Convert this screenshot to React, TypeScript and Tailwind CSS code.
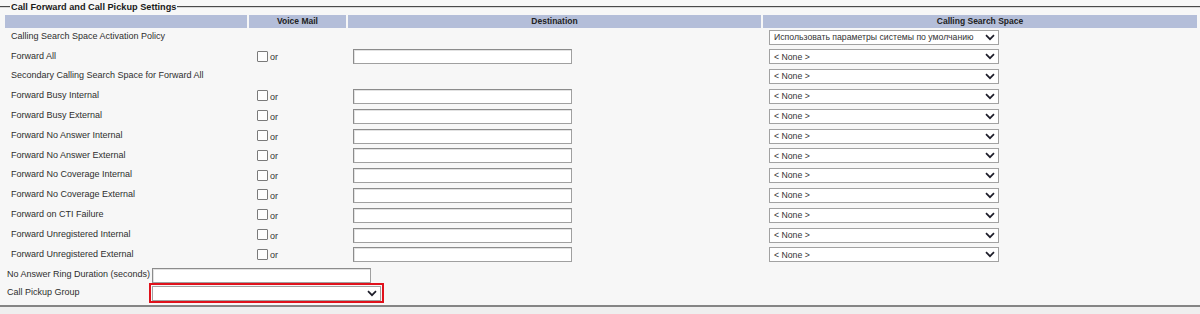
import React from "react";

const Chevron = () => (
  <svg width="10" height="7" viewBox="0 0 10 7" className="shrink-0">
    <path d="M1 1.2 L5 5.2 L9 1.2" fill="none" stroke="#1e1e2a" strokeWidth="1.7" />
  </svg>
);

const Select = ({ text, w = "w-[230px]" }: { text: string; w?: string }) => (
  <div
    className={`${w} h-[15px] bg-white border border-[#a2a2a2] flex items-center justify-between pl-[4px] pr-[3px] text-[#333]`}
  >
    <span className="leading-none whitespace-nowrap text-[8.7px]">{text}</span>
    <Chevron />
  </div>
);

const TextInput = ({ w = "w-[219px]" }: { w?: string }) => (
  <div className={`${w} h-[15px] bg-white border border-[#a0a0a0] border-t-[#8c8c8c] border-l-[#8c8c8c] shadow-[inset_1px_1px_0_#e2e2e2]`} />
);

const Checkbox = () => (
  <div className="flex items-center">
    <div className="w-[11px] h-[11px] bg-[#fdfdfd] border border-[#7a7a7a] rounded-[1px] -mt-[1px]" />
    <span className="ml-[2px] mt-[2px] leading-none text-[#333]">or</span>
  </div>
);

type Row = { label: string; vm: boolean; css: string; h: string };

const rows: Row[] = [
  { label: "Calling Search Space Activation Policy", vm: false, css: "Использовать параметры системы по умолчанию", h: "h-[19px]" },
  { label: "Forward All", vm: true, css: "< None >", h: "h-[19.8px]" },
  { label: "Secondary Calling Search Space for Forward All", vm: false, css: "< None >", h: "h-[19.8px]" },
  { label: "Forward Busy Internal", vm: true, css: "< None >", h: "h-[19.8px]" },
  { label: "Forward Busy External", vm: true, css: "< None >", h: "h-[19.8px]" },
  { label: "Forward No Answer Internal", vm: true, css: "< None >", h: "h-[19.8px]" },
  { label: "Forward No Answer External", vm: true, css: "< None >", h: "h-[19.8px]" },
  { label: "Forward No Coverage Internal", vm: true, css: "< None >", h: "h-[19.8px]" },
  { label: "Forward No Coverage External", vm: true, css: "< None >", h: "h-[19.8px]" },
  { label: "Forward on CTI Failure", vm: true, css: "< None >", h: "h-[19.8px]" },
  { label: "Forward Unregistered Internal", vm: true, css: "< None >", h: "h-[19.8px]" },
  { label: "Forward Unregistered External", vm: true, css: "< None >", h: "h-[19.8px]" },
];

export default function App() {
  return (
    <div className="w-[1200px] h-[314px] overflow-hidden bg-[#f7f7f7] font-['Liberation_Sans',Arial,sans-serif] text-[9px] text-[#2e2e2e] flex flex-col">
      {/* legend */}
      <div className="h-[14px] flex items-center shrink-0">
        <div className="w-[10px] h-[2px] border-t border-[#4a4a4a] border-b border-b-[#d8d8d8]" />
        <span className="px-[1px] mt-[2px] font-bold text-[9.2px] text-[#1a1a1a] leading-none whitespace-nowrap">
          Call Forward and Call Pickup Settings
        </span>
        <div className="flex-1 h-[2px] border-t border-[#4a4a4a] border-b border-b-[#d8d8d8]" />
      </div>

      {/* header */}
      <div className="mt-[1px] h-[13px] flex gap-[2px] pl-[5px] shrink-0 font-bold text-[8.5px] text-[#222]">
        <div className="w-[242px] bg-[#b4bed9]" />
        <div className="w-[97px] bg-[#b4bed9] flex items-center justify-center">Voice Mail</div>
        <div className="w-[413px] bg-[#b4bed9] flex items-center justify-center">Destination</div>
        <div className="w-[434px] bg-[#b4bed9] flex items-center justify-center">Calling Search Space</div>
      </div>

      {/* rows */}
      {rows.map((r, i) => (
        <div key={i} className={`${r.h} flex items-center gap-[2px] pl-[5px] shrink-0`}>
          <div className="w-[242px] pl-[6px] -mt-[1px] whitespace-nowrap">{r.label}</div>
          <div className="w-[97px] pl-[8px]">{r.vm && <Checkbox />}</div>
          <div className="w-[413px] pl-[5px]">{r.vm && <TextInput />}</div>
          <div className="w-[434px] pl-[6px]">
            <Select text={r.css} />
          </div>
        </div>
      ))}

      {/* ring duration */}
      <div className="h-[18.2px] pt-[3px] flex items-center shrink-0">
        <div className="w-[152px] pl-[7px] -mt-[2px] whitespace-nowrap">No Answer Ring Duration (seconds)</div>
        <TextInput w="w-[219px]" />
      </div>

      {/* call pickup group */}
      <div className="h-[22px] flex items-start shrink-0">
        <div className="w-[149px] pl-[7px] pt-[3px] whitespace-nowrap">Call Pickup Group</div>
        <div className="w-[235px] h-[20px] border-2 border-[#e0121c] p-[1px] flex">
          <Select text="" w="w-[229px]" />
        </div>
      </div>

      <div className="h-[2px] bg-[#858585] shrink-0" />
      <div className="flex-1 bg-[#efefef]" />
    </div>
  );
}
